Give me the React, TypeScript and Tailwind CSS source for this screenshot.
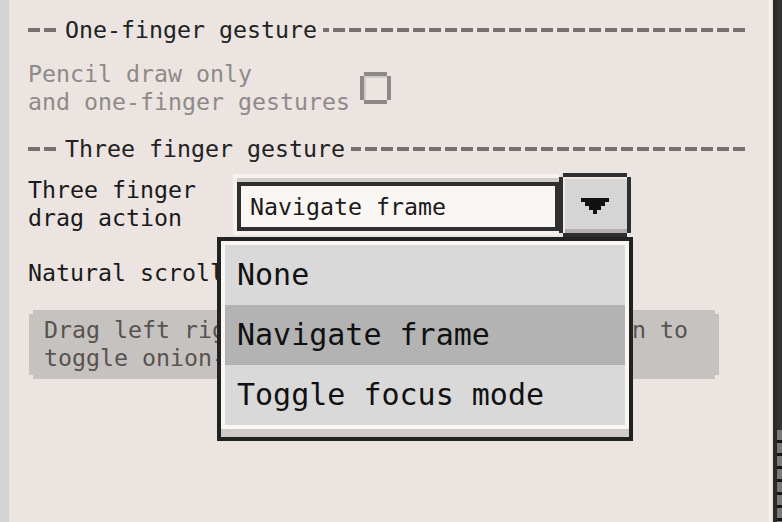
const mono = "font-['DejaVu_Sans_Mono',monospace]";

// pixel-style box with 4px corners cut off
const cut =
  "[clip-path:polygon(4px_0,calc(100%_-_4px)_0,calc(100%_-_4px)_4px,100%_4px,100%_calc(100%_-_4px),calc(100%_-_4px)_calc(100%_-_4px),calc(100%_-_4px)_100%,4px_100%,4px_calc(100%_-_4px),0_calc(100%_-_4px),0_4px,4px_4px)]";

function Header({ title, className = "" }: { title: string; className?: string }) {
  return (
    <div className={`flex h-[28px] items-center ${className}`}>
      <div className="h-[4px] w-[28px] bg-[repeating-linear-gradient(90deg,#75716f_0_12px,transparent_12px_16px)]" />
      <span className="ml-[9px] mr-[6px] text-[#222]">{title}</span>
      <div className="h-[4px] flex-1 bg-[repeating-linear-gradient(270deg,#75716f_0_12px,transparent_12px_16px)]" />
    </div>
  );
}

function Checkbox() {
  return (
    <div className={`relative ml-[10px] h-[32px] w-[31px] bg-[#8c8886] ${cut}`}>
      <div className="absolute inset-[4px] border-l-2 border-t-2 border-[#d2ccc9] bg-[#ebe4e1]" />
    </div>
  );
}

function Select() {
  return (
    <div className="flex items-start">
      <div className="mt-[1px] w-[326px] bg-[#f6f0ee] pb-[4px] pl-[4px] pt-[4px]">
        <div className="bg-[#d4cecb] pt-[4px]">
          <div className="flex h-[49px] items-center border-4 border-[#2f2f2f] bg-[#faf6f4] pl-[9px] text-[#1a1a1a]">
            Navigate frame
          </div>
        </div>
      </div>
      <button type="button" className={`relative h-[64px] w-[72px] bg-[#2f2f2f] ${cut}`}>
        <div className="absolute inset-[4px] flex flex-col border-l-2 border-t-2 border-[#efe9e6] bg-[#d5d5d5]">
          <div className="flex flex-1 items-center justify-center">
            <svg width="28" height="16" viewBox="0 0 28 16" className="mr-[2px] mt-[4px]">
              <path d="M0 0H28V4H24V8H20V12H16V16H12V12H8V8H4V4H0Z" fill="#111" />
            </svg>
          </div>
          <div className="h-[4px] bg-[#b4afac]" />
        </div>
      </button>
    </div>
  );
}

function Menu() {
  const items = ["None", "Navigate frame", "Toggle focus mode"];
  return (
    <div className="absolute left-[208px] top-[237px] w-[416px] bg-[#222] p-[4px]">
      <div className="bg-[#faf6f4] px-[4px] pt-[4px]">
        <div className="flex flex-col">
          {items.map((it) => (
            <div
              key={it}
              className={`flex h-[60px] items-center pl-[12px] text-[30px] text-[#111] ${
                it === "Navigate frame" ? "bg-[#b3b3b3]" : "bg-[#d9d9d9]"
              }`}
            >
              {it}
            </div>
          ))}
        </div>
        <div className="h-[4px]" />
      </div>
      <div className="h-[8px] bg-[#d0cbc8]" />
    </div>
  );
}

export default function App() {
  return (
    <div className={`flex h-[522px] w-[782px] overflow-hidden bg-[#ebe4e1] text-[23.25px] leading-[28px] ${mono}`}>
      <div className="w-[9px] bg-[#d4d4d4]" />
      <div className="relative flex-1 pl-[19px] pr-[24px] pt-[16px]">
        <Header title="One-finger gesture" />
        <div className="mt-[16px] flex items-center">
          <div className="text-[#8e8a88]">
            Pencil draw only
            <br />
            and one-finger gestures
          </div>
          <Checkbox />
        </div>
        <Header title="Three finger gesture" className="mt-[19px]" />
        <div className="mt-[10px] flex items-start">
          <div className="mt-[3px] w-[205px] text-[#1a1a1a]">
            Three finger
            <br />
            drag action
          </div>
          <Select />
        </div>
        <div className="mt-[22px] text-[#1a1a1a]">Natural scroll</div>
        <div className={`ml-[1px] mt-[23px] h-[69px] w-[690px] whitespace-nowrap bg-[#c6c2bf] pl-[15px] pt-[6px] text-[#57534f] ${cut}`}>
          Drag left right with three fingers. Hold on to
          <br />
          toggle onion-skin.
        </div>
        <Menu />
      </div>
      <div className="w-[2px] bg-[#f8efee]" />
      <div className="w-[2px]" />
      <div className="relative w-[9px] bg-[#2a2a2a]">
        <div className="absolute bottom-0 left-[4px] right-0 top-0 bg-[#333]" />
        <div className="absolute bottom-0 left-[4px] right-0 top-[430px] bg-[repeating-linear-gradient(180deg,#7a7a7a_0_10px,#161616_10px_13px)]" />
      </div>
    </div>
  );
}
